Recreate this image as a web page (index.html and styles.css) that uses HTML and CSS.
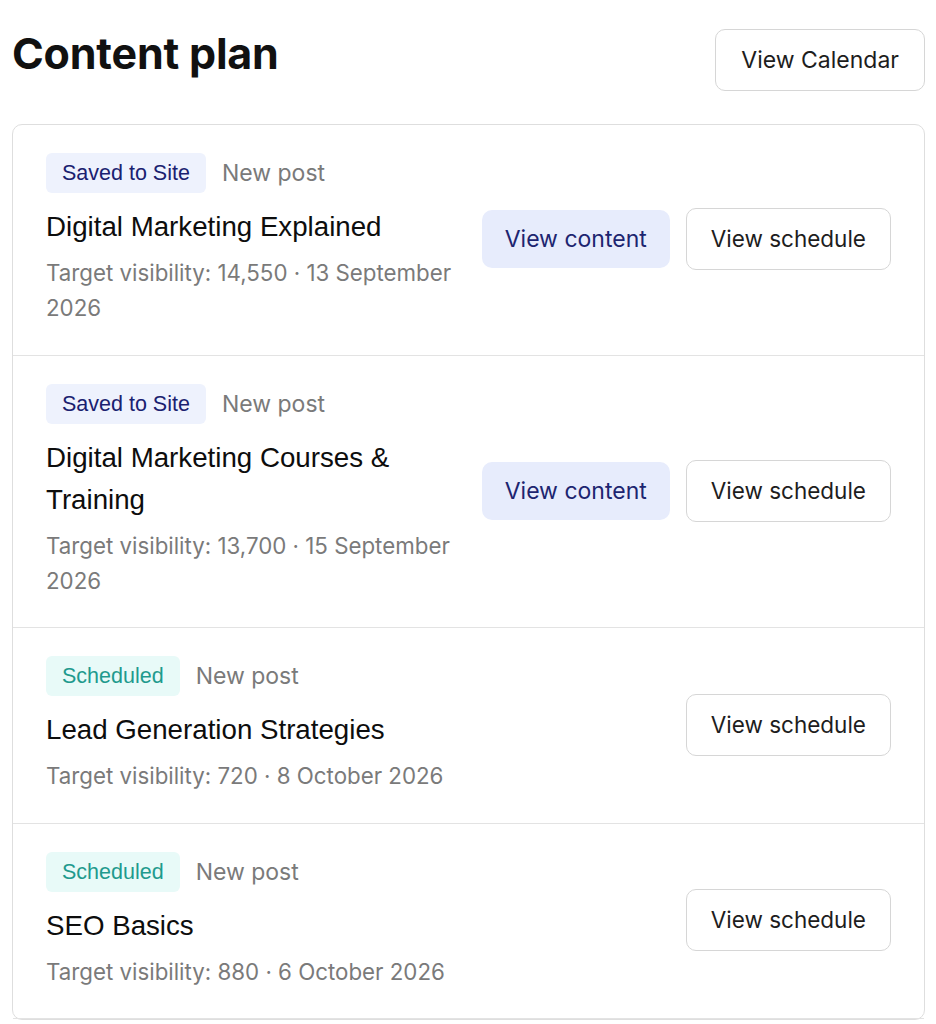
FILE: index.html
```html
<!DOCTYPE html>
<html lang="en">
<head>
<meta charset="utf-8">
<title>Content plan</title>
<link rel="stylesheet" href="styles.css">
</head>
<body>
<div class="page">
  <header class="top">
    <h1 class="heading">Content plan</h1>
    <button class="btn btn-outline btn-cal">View Calendar</button>
  </header>
  <section class="card">
    <div class="row">
      <div class="info">
        <div class="tags"><span class="badge badge-saved">Saved to Site</span><span class="kind">New post</span></div>
        <div class="title">Digital Marketing Explained</div>
        <div class="meta">Target visibility: 14,550 · 13 September 2026</div>
      </div>
      <div class="actions">
        <button class="btn btn-soft">View content</button>
        <button class="btn btn-outline">View schedule</button>
      </div>
    </div>
    <div class="row">
      <div class="info">
        <div class="tags"><span class="badge badge-saved">Saved to Site</span><span class="kind">New post</span></div>
        <div class="title">Digital Marketing Courses &amp; Training</div>
        <div class="meta">Target visibility: 13,700 · 15 September 2026</div>
      </div>
      <div class="actions">
        <button class="btn btn-soft">View content</button>
        <button class="btn btn-outline">View schedule</button>
      </div>
    </div>
    <div class="row">
      <div class="info">
        <div class="tags"><span class="badge badge-sched">Scheduled</span><span class="kind">New post</span></div>
        <div class="title">Lead Generation Strategies</div>
        <div class="meta">Target visibility: 720 · 8 October 2026</div>
      </div>
      <div class="actions">
        <button class="btn btn-outline">View schedule</button>
      </div>
    </div>
    <div class="row">
      <div class="info">
        <div class="tags"><span class="badge badge-sched">Scheduled</span><span class="kind">New post</span></div>
        <div class="title">SEO Basics</div>
        <div class="meta">Target visibility: 880 · 6 October 2026</div>
      </div>
      <div class="actions">
        <button class="btn btn-outline">View schedule</button>
      </div>
    </div>
  </section>
</div>
</body>
</html>
```
FILE: styles.css
```css
* { box-sizing: border-box; }
html, body { margin: 0; padding: 0; background: #ffffff; }
body { font-family: Inter, "Liberation Sans", sans-serif; color: #1a1a1a; }
.page { padding: 28px 11px 0 12px; }
.top { display: flex; justify-content: space-between; align-items: flex-start; }
.heading { margin: 0; font-size: 43px; font-weight: 700; letter-spacing: -0.2px; line-height: 50px; color: #111; }
.btn { font-family: Inter, "Liberation Sans", sans-serif; font-size: 22.5px; font-weight: 400; border-radius: 10px; cursor: pointer; line-height: 26px; white-space: nowrap; }
.btn-outline { background: #fff; border: 1.5px solid #d6d6d6; color: #1d1d1d; height: 62px; padding: 0 24px; }
.btn-cal { margin-top: 1px; padding: 0 25px; font-size: 23px; }
.btn-soft { background: #e7ecfc; border: none; color: #1d2570; height: 58px; padding: 0 23px; font-size: 23px; }
.card { margin-top: 33px; border: 1.5px solid #dedede; border-radius: 10px; }
.row { display: flex; align-items: center; justify-content: space-between; padding: 28px 33px 29.5px 33px; border-bottom: 1.5px solid #e3e3e3; }
.info { flex: 0 1 420px; min-width: 0; }
.tags { display: flex; align-items: center; gap: 16px; }
.badge { font-family: "Liberation Sans", Arial, sans-serif; font-size: 21.5px; height: 40px; line-height: 40px; padding: 0 16px; border-radius: 6px; }
.badge-saved { background: #eef2fd; color: #1a2170; }
.badge-sched { background: #e8faf8; color: #1f9a8e; }
.kind { font-size: 23px; color: #7a7a7a; }
.title { font-family: "Liberation Sans", Arial, sans-serif; font-size: 27.7px; line-height: 42px; margin-top: 13px; color: #0d0d0d; }
.meta { font-size: 22.3px; line-height: 35px; margin-top: 7px; color: #7a7a7a; }
.actions { display: flex; align-items: center; gap: 16px; }
```
